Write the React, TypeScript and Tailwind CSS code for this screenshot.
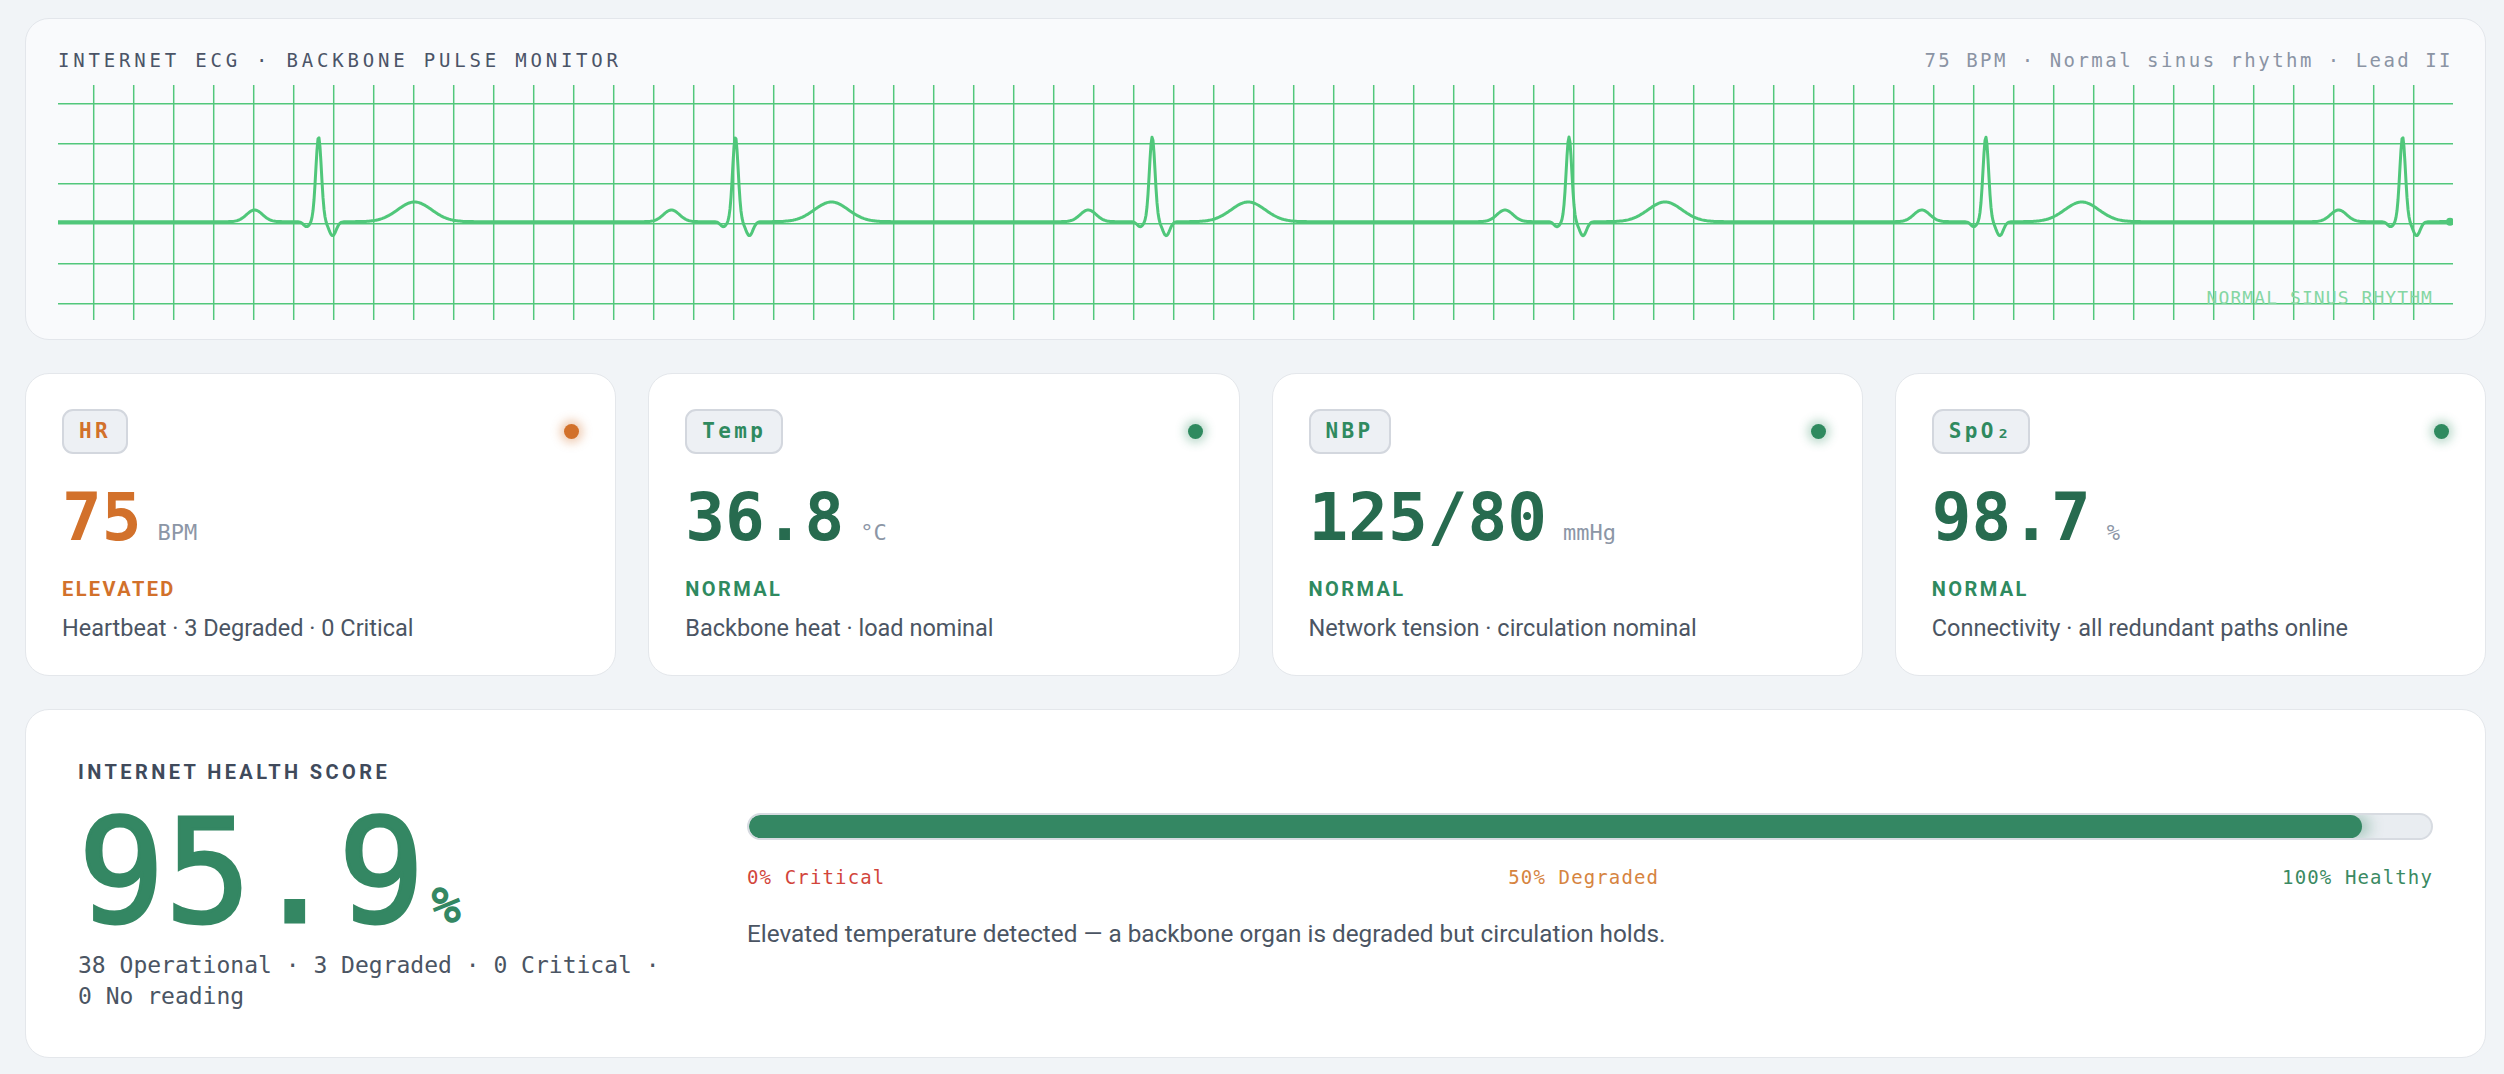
import React from 'react'

const MONO = { fontFamily: '"DejaVu Sans Mono", "Liberation Mono", monospace' }
const SANS = { fontFamily: 'Roboto, "Noto Sans", sans-serif' }

// ecg strip geometry (px, matches the rendered strip size)
const W = 2395
const H = 235
const BASE = 136.7
const FIRST_R = 260.6
const PERIOD = 416.8

function bump(d: number, c: number, a: number, s: number) {
  return a * Math.exp(-((d - c) ** 2) / (2 * s * s))
}

function ecgY(x: number) {
  const k = Math.round((x - FIRST_R) / PERIOD)
  const d = x - (FIRST_R + k * PERIOD)
  const v =
    bump(d, -64, 11.7, 8) +
    bump(d, -12, -5, 3) +
    bump(d, 0, 84.7, 2.8) +
    bump(d, 14, -14, 3.5) +
    bump(d, 96, 19.7, 17)
  return BASE - v
}

const tracePath = (() => {
  const pts: string[] = []
  for (let x = 0; x <= W - 3; x += 1) {
    pts.push(`${x === 0 ? 'M' : 'L'}${x},${ecgY(x).toFixed(1)}`)
  }
  return pts.join(' ')
})()

const hLines = Array.from({ length: 6 }, (_, i) => 18.7 + i * 40)
const vLines = Array.from({ length: 59 }, (_, i) => 35.7 + i * 40)

interface Vital {
  label: string
  value: string
  unit: string
  status: string
  desc: string
  warn?: boolean
}

const vitals: Vital[] = [
  { label: 'HR', value: '75', unit: 'BPM', status: 'ELEVATED', desc: 'Heartbeat · 3 Degraded · 0 Critical', warn: true },
  { label: 'Temp', value: '36.8', unit: '°C', status: 'NORMAL', desc: 'Backbone heat · load nominal' },
  { label: 'NBP', value: '125/80', unit: 'mmHg', status: 'NORMAL', desc: 'Network tension · circulation nominal' },
  { label: 'SpO₂', value: '98.7', unit: '%', status: 'NORMAL', desc: 'Connectivity · all redundant paths online' },
]

export default function App() {
  return (
    <div className="min-h-screen bg-[#f1f4f7] pl-[25px] pr-[18px] pt-[18px] pb-[20px] flex flex-col gap-[33px]">
      <EcgPanel />

      <div className="grid grid-cols-4 gap-[32px]">
        {vitals.map((v) => (
          <VitalCard key={v.label} vital={v} />
        ))}
      </div>

      <HealthScore />
    </div>
  )
}

function EcgPanel() {
  return (
    <section className="rounded-3xl border border-[#e3e6eb] bg-[#f9fafc] px-[32px] pt-[27px] pb-[19px]">
      <header className="flex items-center justify-between leading-[28px]" style={MONO}>
        <h1 className="text-[19px] tracking-[0.2em] text-[#4b5467]">INTERNET ECG · BACKBONE PULSE MONITOR</h1>
        <p className="text-[19px] tracking-[0.13em] text-[#8b94a4]">75 BPM · Normal sinus rhythm · Lead II</p>
      </header>

      <div className="relative mt-[11px] h-[235px]">
        <svg width={W} height={H} viewBox={`0 0 ${W} ${H}`} className="block">
          {hLines.map((y) => (
            <line key={`h${y}`} x1={0} x2={W} y1={y} y2={y} stroke="#52c77b" strokeWidth={1.5} />
          ))}
          {vLines.map((x) => (
            <line key={`v${x}`} x1={x} x2={x} y1={0} y2={H} stroke="#52c77b" strokeWidth={1.5} />
          ))}
          <path d={tracePath} fill="none" stroke="#50c77a" strokeWidth={3} strokeLinejoin="round" strokeLinecap="round" />
          <circle cx={W - 3} cy={BASE} r={4} fill="#50c77a" />
        </svg>
        <span
          className="absolute right-[20px] bottom-[13px] text-[18px] leading-[18px] tracking-[0.06em] text-[#85d6a3]"
          style={MONO}
        >
          NORMAL SINUS RHYTHM
        </span>
      </div>
    </section>
  )
}

function VitalCard({ vital }: { vital: Vital }) {
  const accent = vital.warn ? 'text-[#d2712b]' : 'text-[#2f8a5f]'
  return (
    <div className="rounded-3xl border border-[#e4e7eb] bg-white px-[36px] pt-[35px] pb-[32px]">
      <div className="flex items-center justify-between">
        <span
          className={`h-[45px] flex items-center rounded-[11px] border-2 border-[#d3d7de] bg-[#edf0f4] px-[15px] text-[21px] font-bold tracking-[0.16em] ${accent}`}
          style={MONO}
        >
          {vital.label}
        </span>
        <span
          className={
            vital.warn
              ? 'w-[15px] h-[15px] rounded-full bg-[#d2712b] shadow-[0_0_10px_4px_rgba(210,113,43,0.35)]'
              : 'w-[15px] h-[15px] rounded-full bg-[#2f8a5f] shadow-[0_0_10px_4px_rgba(47,138,95,0.3)]'
          }
        />
      </div>

      <div className="mt-[31px] flex items-baseline leading-none" style={MONO}>
        <span className={`text-[66px] font-bold ${vital.warn ? 'text-[#d2712b]' : 'text-[#276b4f]'}`}>{vital.value}</span>
        <span className="ml-[16px] text-[22px] text-[#8c96a6]">{vital.unit}</span>
      </div>

      <div className={`mt-[24px] text-[20px] leading-[28px] font-bold tracking-[0.12em] ${accent}`} style={SANS}>
        {vital.status}
      </div>
      <p className="mt-[10px] text-[23.5px] leading-[30px] text-[#4b5563]" style={SANS}>
        {vital.desc}
      </p>
    </div>
  )
}

function HealthScore() {
  const score = 95.9
  return (
    <section className="rounded-3xl border border-[#e4e7eb] bg-white px-[52px] pt-[48px] pb-[45px] grid grid-cols-[595px_1fr] gap-x-[74px] items-center">
      <div>
        <h2 className="text-[20px] leading-[28px] font-bold tracking-[0.17em] text-[#404a5b]" style={SANS}>
          INTERNET HEALTH SCORE
        </h2>
        <div className="mt-[14px] flex items-baseline leading-none text-[#348763]" style={MONO}>
          <span className="text-[144px] [-webkit-text-stroke:3px_#348763]">95.9</span>
          <span className="ml-[7px] text-[48px] [-webkit-text-stroke:1.5px_#348763]">%</span>
        </div>
        <p className="mt-[6px] text-[23px] leading-[31px] text-[#4b5563]" style={MONO}>
          38 Operational · 3 Degraded · 0 Critical · 0 No reading
        </p>
      </div>

      <div className="pb-[8px]">
        <div className="h-[27px] rounded-full border-2 border-[#d7dbe1] bg-[#e9edf1] overflow-hidden">
          <div
            className="h-full rounded-full bg-[#348763] shadow-[8px_0_14px_rgba(52,135,99,0.35)]"
            style={{ width: `${score}%` }}
          />
        </div>
        <div className="mt-[25px] flex justify-between text-[19px] leading-[24px] tracking-[0.06em]" style={MONO}>
          <span className="text-[#d2453b]">0% Critical</span>
          <span className="text-[#d6843f]">50% Degraded</span>
          <span className="text-[#3a8a63]">100% Healthy</span>
        </div>
        <p className="mt-[30px] text-[24.3px] leading-[30px] text-[#4b5563]" style={SANS}>
          Elevated temperature detected — a backbone organ is degraded but circulation holds.
        </p>
      </div>
    </section>
  )
}
